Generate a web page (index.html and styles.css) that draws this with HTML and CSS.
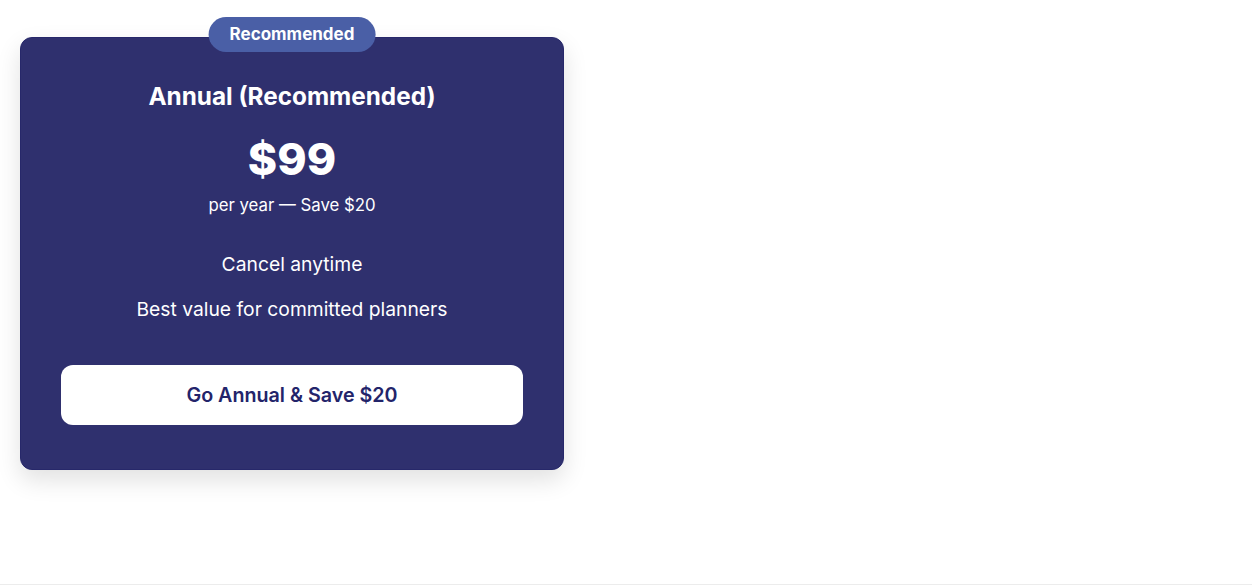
FILE: index.html
```html
<!DOCTYPE html>
<html lang="en">

<head>
  <meta charset="UTF-8">
  <meta name="viewport" content="width=device-width, initial-scale=1.0">
  <title>Annual Plan</title>
  <link rel="stylesheet" href="styles.css">
</head>

<body>
  <div class="plans">
    <div class="plan-card">
      <span class="badge">Recommended</span>
      <h2>Annual (Recommended)</h2>
      <div class="price">$99</div>
      <p class="period">per year — Save $20</p>
      <ul class="features">
        <li>Cancel anytime</li>
        <li>Best value for committed planners</li>
      </ul>
      <button class="cta">Go Annual &amp; Save $20</button>
    </div>
  </div>
</body>

</html>
```

FILE: styles.css
```css
* {
  box-sizing: border-box;
  margin: 0;
  padding: 0;
}

html {
  background: #fff;
}

body {
  font-family: Inter, "Noto Sans", Arial, sans-serif;
  color: #fff;
  min-height: 585px;
  border-bottom: 1px solid #ececec;
}

.plans {
  padding: 37px 20px;
}

.plan-card {
  position: relative;
  width: 544px;
  background: #2f306e;
  border: 1px solid #27286a;
  border-radius: 12px;
  box-shadow: 0 10px 24px rgba(0, 0, 0, 0.12);
  padding: 43px 40px 44px;
  text-align: center;
}

.badge {
  position: absolute;
  top: -21px;
  left: 50%;
  transform: translateX(-50%);
  background: #4a5fa6;
  color: #fff;
  font-size: 17px;
  font-weight: 700;
  padding: 7px 21px;
  border-radius: 18px;
  line-height: 21px;
}

.plan-card h2 {
  font-size: 24.3px;
  font-weight: 700;
  line-height: 30px;
}

.price {
  font-size: 44.5px;
  font-weight: 800;
  line-height: 52px;
  margin-top: 22px;
}

.period {
  font-size: 16.8px;
  line-height: 22px;
  margin-top: 9px;
}

.features {
  list-style: none;
  margin-top: 36px;
  font-size: 19.3px;
  line-height: 24px;
}

.features li + li {
  margin-top: 21px;
}

.cta {
  display: block;
  width: 100%;
  height: 60px;
  margin-top: 44px;
  background: #fff;
  color: #23246a;
  border: none;
  border-radius: 12px;
  font-family: inherit;
  font-size: 19.7px;
  font-weight: 600;
  cursor: pointer;
}
```
